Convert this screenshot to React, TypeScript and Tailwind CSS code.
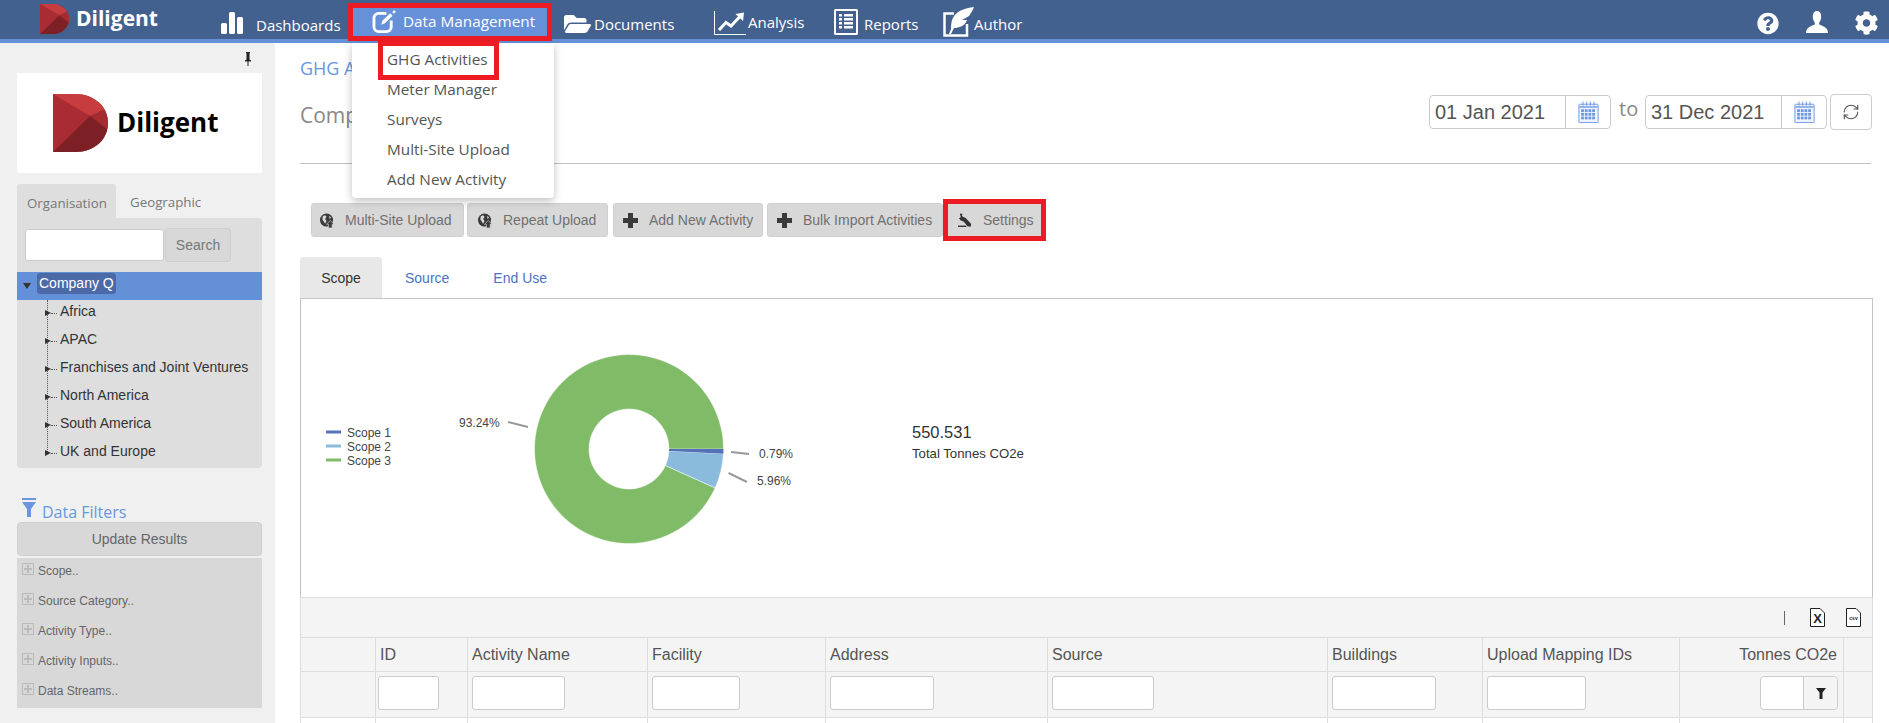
import React from 'react';
import { FaFolderOpen, FaCog, FaQuestionCircle } from 'react-icons/fa';
import { RefreshCw } from 'lucide-react';

const DiligentMark = ({ id, className }: { id: string; className: string }) => (
  <svg viewBox="0 0 55 58" className={className}>
    <clipPath id={id}>
      <path d="M0 0H22C42 0 55 13 55 29C55 45 42 58 22 58H0Z" />
    </clipPath>
    <g clipPath={`url(#${id})`}>
      <rect width="55" height="58" fill="#a82c32" />
      <polygon points="0,0 32,0 55,14 37,22" fill="#c63c3f" />
      <polygon points="37,22 55,14 55,36" fill="#a42b30" />
      <polygon points="0,58 37,22 55,36 55,58" fill="#7c2025" />
    </g>
  </svg>
);

const EditIcon = () => (
  <svg viewBox="0 0 26 24" className="h-[23px] w-[25px] shrink-0" fill="none" stroke="white">
    <path d="M15 3.500H7A5 5 0 0 0 2 8.500V17.500A5 5 0 0 0 7 22.500H15A5 5 0 0 0 20 17.500V11" strokeWidth="3" />
    <path d="M9.500 15.500L11 11L19 3.500L21.500 6L13.500 13.800Z" fill="white" stroke="none" />
    <path d="M22 3L24 1" strokeWidth="2.500" />
  </svg>
);

const BarsIcon = () => (
  <svg viewBox="0 0 22 22" className="h-[22px] w-[22px] shrink-0" fill="white">
    <rect x="0" y="11" width="6" height="11" rx="1.500" />
    <rect x="8" y="0" width="6" height="22" rx="1.500" />
    <rect x="16" y="5" width="6" height="17" rx="1.500" />
  </svg>
);

const ChartIcon = () => (
  <svg viewBox="0 0 32 24" className="h-[24px] w-[32px] shrink-0" fill="none" stroke="white">
    <path d="M0.500 0V23.500H32" strokeWidth="1" />
    <path d="M5 19L12 11.500L17 15L25.500 6" strokeWidth="3" />
    <polygon points="21.500,3 30,1.500 29,10" fill="white" stroke="none" />
  </svg>
);

const ListIcon = () => (
  <svg viewBox="0 0 24 26" className="h-[26px] w-[24px] shrink-0">
    <rect width="24" height="26" rx="1.500" fill="white" />
    <rect x="2" y="2" width="20" height="22" fill="#43618f" />
    {[5, 9, 13, 17].map((y) => (
      <g key={y} fill="white">
        <rect x="5" y={y} width="3" height="2.500" />
        <rect x="10" y={y} width="9" height="2.500" />
      </g>
    ))}
  </svg>
);

const FeatherIcon = () => (
  <svg viewBox="0 0 31 30" className="h-[30px] w-[31px] shrink-0" fill="none">
    <path d="M11 6.500H1.500V28.500H24V17" stroke="white" strokeWidth="2.500" />
    <path d="M31 0C22 1 12 4 9 13C8 17 8 20 8 22L6 27H8L11 21C16 21 22 19 24 13L19 13L26 9C28 6 30 3 31 0Z" fill="white" />
  </svg>
);

const UserIcon = () => (
  <svg viewBox="0 0 22 22" className="h-[22px] w-[22px]" fill="white">
    <path d="M11 0C8 0 6.800 2.500 6.800 5.500C6.800 8.500 8 10.500 8.800 11.500V13.500C6 15 0 16 0 22H22C22 16 16 15 13.200 13.500V11.500C14 10.500 15.200 8.500 15.200 5.500C15.200 2.500 14 0 11 0Z" />
  </svg>
);

const CalendarIcon = () => (
  <svg viewBox="0 0 22 24" className="h-[22px] w-[21px]" fill="none" stroke="#6a96e0">
    <rect x="0.500" y="3.500" width="21" height="20" strokeWidth="1" rx="1" fill="#eef3fb" />
    <path d="M1 6.500H21" strokeWidth="1.500" />
    <path d="M5 0.500V5M9 0.500V5M13 0.500V5M17 0.500V5" strokeWidth="1" />
    {[9, 13, 17].map((y) =>
      [3, 7, 11, 15].map((x) => <rect key={`${x}-${y}`} x={x} y={y} width="3" height="3" fill="#6a96e0" stroke="none" />),
    )}
  </svg>
);

const GlobeIcon = () => (
  <svg viewBox="0 0 15 16" className="h-[15px] w-[14px] shrink-0">
    <circle cx="7" cy="7.500" r="7" fill="#3a3a3a" />
    <path d="M3 3.500L5.500 2.500L7 4L5.500 6.500L7 8.500L5.500 11.500L4 9L2.500 7Z" fill="#d8d8d8" />
    <path d="M10 3L12 5L10 6Z" fill="#d8d8d8" />
    <path d="M11 8L15 12H13V16H9V12H7Z" fill="#3a3a3a" stroke="#d8d8d8" strokeWidth="0.700" />
  </svg>
);

const PlusIcon = () => (
  <svg viewBox="0 0 15 15" className="h-[15px] w-[15px] shrink-0" fill="#3a3a3a">
    <path d="M5 0H10V5H15V10H10V15H5V10H0V5H5Z" />
  </svg>
);

const WrenchIcon = () => (
  <svg viewBox="0 0 14 15" className="ml-[10px] h-[15px] w-[13px] shrink-0" fill="#333">
    <path d="M2 0L5 0.500L4 2.500L6 4L8 4.500L14 11V14H10.500L6 8.500L3 7.500L1 5L3 4L2.500 2Z" />
    <rect x="0" y="13" width="9" height="1.500" />
  </svg>
);

const FileIcon = ({ label, big }: { label: string; big?: boolean }) => (
  <svg viewBox="0 0 15 19" className="h-[19px] w-[15px]">
    <path d="M0.500 0.500H10L14.500 5V18.500H0.500Z" fill="white" stroke="#222" />
    <text x="7.500" y={big ? 15 : 12} textAnchor="middle" fontSize={big ? 13 : 5} fontWeight="bold" fill="#222">
      {label}
    </text>
  </svg>
);

const polar = (r: number, deg: number) => {
  const a = (deg * Math.PI) / 180;
  return `${(629 + r * Math.cos(a)).toFixed(2)} ${(449 + r * Math.sin(a)).toFixed(2)}`;
};

const slice = (from: number, to: number) => {
  const large = to - from > 180 ? 1 : 0;
  return `M${polar(40, from)}L${polar(94.5, from)}A94.5 94.5 0 ${large} 1 ${polar(94.5, to)}L${polar(40, to)}A40 40 0 ${large} 0 ${polar(40, from)}Z`;
};

const DonutChart = () => (
  <svg viewBox="301 299 1571 298" className="block h-[298px] w-[1571px]" fontSize="12" fill="#444">
    <path d={slice(24.3, 360)} fill="#80bb67" stroke="white" strokeWidth="0.500" />
    <path d={slice(2.84, 24.3)} fill="#8abbdc" stroke="white" strokeWidth="0.500" />
    <path d={slice(0, 2.84)} fill="#5572b8" />
    <path d="M508 422L528 427M731 452L749 454M728.500 473L747 482" stroke="#999" strokeWidth="2" />
    <text x="459" y="427">93.24%</text>
    <text x="759" y="458">0.79%</text>
    <text x="757" y="485">5.96%</text>
    {[
      ['Scope 1', 432, '#5572b8'],
      ['Scope 2', 446, '#8abbdc'],
      ['Scope 3', 460, '#80bb67'],
    ].map(([name, y, color]) => (
      <g key={name as string}>
        <rect x="326" y={(y as number) - 1.500} width="15" height="3" fill={color as string} />
        <text x="347" y={(y as number) + 5}>{name}</text>
      </g>
    ))}
    <text x="912" y="438" fontSize="16.500" fill="#333">550.531</text>
    <text x="912" y="458" fontSize="13.200" fill="#333">Total Tonnes CO2e</text>
  </svg>
);

const treeItems = ['Africa', 'APAC', 'Franchises and Joint Ventures', 'North America', 'South America', 'UK and Europe'];
const filterItems = ['Scope..', 'Source Category..', 'Activity Type..', 'Activity Inputs..', 'Data Streams..'];
const menuItems = ['GHG Activities', 'Meter Manager', 'Surveys', 'Multi-Site Upload', 'Add New Activity'];
const columns = ['', 'ID', 'Activity Name', 'Facility', 'Address', 'Source', 'Buildings', 'Upload Mapping IDs'];
const inputWidths = ['', 'w-[61px]', 'w-[93px]', 'w-[88px]', 'w-[104px]', 'w-[102px]', 'w-[104px]', 'w-[99px]'];
const gridCols = 'grid grid-cols-[74px_92px_180px_178px_222px_280px_155px_197px_164px_29px]';

const ActionButton = ({ icon, label, className }: { icon: React.ReactNode; label: string; className: string }) => (
  <button className={`flex h-[34px] items-center gap-[11px] rounded-[3px] border border-[#cfcfcf] bg-[#d8d8d8] text-[14px] text-[#707070] ${className}`}>
    {icon}
    <span className="whitespace-nowrap">{label}</span>
  </button>
);

const DateInput = ({ value }: { value: string }) => (
  <div className="flex h-[34px] w-[182px] rounded-[4px] border border-[#cccccc] bg-white">
    <div className="w-[135px] pl-[5px] text-[20px] leading-[32px] whitespace-nowrap text-[#555]">{value}</div>
    <div className="flex flex-1 items-center justify-center border-l border-[#cccccc]">
      <CalendarIcon />
    </div>
  </div>
);

export default function App() {
  return (
    <div className="flex h-[723px] w-[1889px] flex-col overflow-hidden bg-white font-['Liberation_Sans',Arial,sans-serif]">
      {/* Top nav */}
      <header className="h-[43px] shrink-0 border-b-4 border-[#6690d8] bg-[#43618f] font-['Open_Sans',sans-serif] text-[15px] text-white">
        <div className="flex h-[39px] items-start">
          <DiligentMark id="nav-mark" className="mt-[3px] ml-[40px] h-[32px] w-[29px]" />
          <span className="mt-[4px] ml-[7px] w-[84px] text-[21px] leading-[28px] font-bold">Diligent</span>
          <div className="mt-[12px] ml-[61px] flex w-[119px] items-start">
            <BarsIcon />
            <span className="mt-[2px] ml-[13px] whitespace-nowrap">Dashboards</span>
          </div>
          <div className="relative mt-[3px] ml-[8px] flex h-[38px] w-[204px] items-center border-[5px] border-[#ed1c24] bg-[#6690d8] pb-[1px] pl-[19px]">
            <EditIcon />
            <span className="ml-[6px] text-[15.300px] whitespace-nowrap">Data Management</span>
            <div className="absolute top-[35px] left-[-1px] z-10 w-[202px] rounded-b-[4px] bg-white pt-[1px] pb-[4px] text-[15.300px] text-[#555] shadow-[0_3px_8px_rgba(0,0,0,0.25)]">
              {menuItems.map((item) => (
                <div key={item} className="h-[30px] pl-[35px] leading-[30px] whitespace-nowrap">
                  {item}
                </div>
              ))}
              <div className="absolute top-[-2px] left-[26px] h-[39px] w-[121px] border-[5px] border-[#ed1c24]" />
            </div>
          </div>
          <div className="mt-[12px] ml-[12px] flex w-[110px] items-center">
            <FaFolderOpen className="h-[24px] w-[27px] shrink-0" />
            <span className="ml-[3px] whitespace-nowrap">Documents</span>
          </div>
          <div className="mt-[11px] ml-[40px] flex w-[91px] items-start">
            <ChartIcon />
            <span className="ml-[2px] whitespace-nowrap">Analysis</span>
          </div>
          <div className="mt-[9px] ml-[29px] flex w-[84px] items-start">
            <ListIcon />
            <span className="mt-[4px] ml-[6px] whitespace-nowrap">Reports</span>
          </div>
          <div className="mt-[7px] ml-[25px] flex w-[80px] items-start">
            <FeatherIcon />
            <span className="mt-[6px] whitespace-nowrap">Author</span>
          </div>
          <div className="ml-auto flex items-start pt-[11px] pr-[10px]">
            <FaQuestionCircle className="mt-[1px] h-[23px] w-[22px]" />
            <div className="ml-[27px]">
              <UserIcon />
            </div>
            <FaCog className="ml-[26px] h-[24px] w-[25px]" />
          </div>
        </div>
      </header>

      <div className="flex min-h-0 flex-1">
        {/* Sidebar */}
        <aside className="w-[275px] shrink-0 bg-[#f0f0f0] pr-[13px] pl-[17px]">
          <div className="flex h-[30px] items-end justify-end pr-[10px] pb-[7px]">
            <svg viewBox="0 0 8 14" className="h-[14px] w-[8px]" fill="#222">
              <path d="M2 0H6V1H5.500V7.500L7 8.500V9.500H4.500V14H3.500V9.500H1V8.500L2.500 7.500V1H2Z" />
            </svg>
          </div>
          <div className="flex h-[100px] items-center bg-white pl-[36px]">
            <DiligentMark id="side-mark" className="h-[58px] w-[55px]" />
            <span className="mt-[-2px] ml-[9px] font-['Open_Sans',sans-serif] text-[26px] font-bold text-black">Diligent</span>
          </div>

          <div className="mt-[11px] flex h-[34px] font-['Open_Sans',sans-serif] text-[13.300px] text-[#777]">
            <div className="w-[99px] rounded-t-[3px] bg-[#dedede] pt-[10px] pl-[10px] leading-[18px]">Organisation</div>
            <div className="pt-[9px] pl-[14px] leading-[18px]">Geographic</div>
          </div>
          <div className="h-[250px] rounded-[4px] rounded-tl-none bg-[#dedede] pt-[10px]">
            <div className="flex h-[34px] items-center pl-[8px]">
              <input className="h-[32px] w-[139px] rounded-[3px] border border-[#cccccc] bg-white" />
              <button className="ml-[1px] h-[34px] w-[66px] rounded-[3px] border border-[#cfcfcf] bg-[#d8d8d8] text-[14px] text-[#777]">Search</button>
            </div>
            <div className="mt-[10px] flex h-[28px] items-start bg-[#6490d8] pl-[6px]">
              <span className="mt-[11px] h-0 w-0 border-x-[4px] border-t-[6px] border-x-transparent border-t-[#333]" />
              <span className="mt-[1px] ml-[6px] h-[21px] w-[79px] rounded-[3px] border border-[#4a68a6] bg-[#4c6aa8] pl-[1px] text-[14px] leading-[19px] whitespace-nowrap text-white">Company Q</span>
            </div>
            <div className="relative text-[14px] text-[#333]">
              <div className="absolute top-0 left-[30px] h-[154px] border-l border-dotted border-[#555]" />
              {treeItems.map((item) => (
                <div key={item} className="relative h-[28px] pl-[43px] leading-[22px] whitespace-nowrap">
                  <span className="absolute top-[10px] left-[28px] h-0 w-0 border-y-[3.500px] border-l-[6px] border-y-transparent border-l-[#333]" />
                  <span className="absolute top-[13px] left-[34px] w-[6px] border-t border-dotted border-[#555]" />
                  {item}
                </div>
              ))}
            </div>
          </div>

          <div className="mt-[30px] flex h-[24px] items-start pl-[5px]">
            <svg viewBox="0 0 14 19" className="h-[19px] w-[14px]" fill="#6a96e0">
              <rect width="14" height="2" />
              <path d="M0 4H14L9 11V19H5V11Z" />
            </svg>
            <span className="mt-[4px] ml-[6px] font-['Open_Sans',sans-serif] text-[16px] leading-[20px] text-[#6a96e0]">Data Filters</span>
          </div>
          <button className="block h-[34px] w-[245px] rounded-[4px] border border-[#cfcfcf] bg-[#d8d8d8] pt-[1px] text-[14px] text-[#666]">Update Results</button>
          <div className="mt-[2px] h-[150px] bg-[#d8d8d8]">
            {filterItems.map((item) => (
              <div key={item} className="flex h-[30px] items-start pt-[5px] pl-[5px] text-[12px] leading-[16px] text-[#666]">
                <span className="relative h-[12px] w-[12px] shrink-0 border border-[#bbbbbb]">
                  <span className="absolute top-[4px] left-[1px] h-[2px] w-[8px] bg-[#bbbbbb]" />
                  <span className="absolute top-[1px] left-[4px] h-[8px] w-[2px] bg-[#bbbbbb]" />
                </span>
                <span className="ml-[4px] whitespace-nowrap">{item}</span>
              </div>
            ))}
          </div>
        </aside>

        {/* Main content */}
        <main className="min-w-0 flex-1 pt-[14px] pr-[16px] pl-[25px]">
          <div className="h-[22px] w-[52px] overflow-hidden font-['Open_Sans',sans-serif] text-[18px] leading-[22px] whitespace-nowrap text-[#6a96e0]">GHG Activities</div>
          <div className="mt-[15px] flex h-[36px] items-start justify-between">
            <div className="mt-[7px] w-[52px] overflow-hidden font-['Open_Sans',sans-serif] text-[21px] leading-[28px] whitespace-nowrap text-[#888]">Company Q</div>
            <div className="mr-[1px] flex items-start pt-[1px]">
              <DateInput value="01 Jan 2021" />
              <span className="ml-[8px] w-[26px] font-['Open_Sans',sans-serif] text-[20px] leading-[28px] text-[#888]">to</span>
              <DateInput value="31 Dec 2021" />
              <button className="mt-[-1px] ml-[3px] flex h-[36px] w-[42px] items-center justify-center rounded-[4px] border border-[#cccccc] bg-white">
                <RefreshCw className="h-[18px] w-[18px] text-[#555]" strokeWidth={1.500} />
              </button>
            </div>
          </div>
          <div className="mt-[33px] w-[1571px] border-t border-[#c0c0c0]" />

          <div className="mt-[35px] flex h-[42px] items-center pl-[11px]">
            <ActionButton className="w-[153px] pl-[8px]" icon={<GlobeIcon />} label="Multi-Site Upload" />
            <div className="w-[3px]" />
            <ActionButton className="w-[141px] pl-[10px]" icon={<GlobeIcon />} label="Repeat Upload" />
            <div className="w-[5px]" />
            <ActionButton className="w-[150px] pl-[9px]" icon={<PlusIcon />} label="Add New Activity" />
            <div className="w-[4px]" />
            <ActionButton className="w-[176px] pl-[9px]" icon={<PlusIcon />} label="Bulk Import Activities" />
            <div className="flex h-[42px] w-[103px] items-center border-[5px] border-[#ed1c24] bg-[#d8d8d8] text-[14px] text-[#707070]">
              <WrenchIcon />
              <span className="ml-[12px]">Settings</span>
            </div>
          </div>

          <div className="mt-[16px] flex h-[41px] text-[14px]">
            <div className="w-[82px] rounded-t-[4px] bg-[#e8e8e8] text-center leading-[42px] text-[#333]">Scope</div>
            <div className="ml-[23px] leading-[42px] text-[#4a72c4]">Source</div>
            <div className="ml-[44px] leading-[42px] text-[#4a72c4]">End Use</div>
          </div>

          <div className="w-[1573px] border border-b-0 border-[#c4c4c4]">
            <DonutChart />
          </div>

          {/* Grid */}
          <div className="w-[1573px] border-x border-t border-[#dddddd] bg-[#f4f4f4] text-[16px] text-[#555]">
            <div className="flex h-[39px] items-center justify-end pr-[11px]">
              <span className="mr-[25px] h-[14px] border-l border-[#666]" />
              <FileIcon label="X" big />
              <div className="ml-[21px]">
                <FileIcon label="csv" />
              </div>
            </div>
            <div className={`${gridCols} h-[34px] border-t border-[#dddddd]`}>
              {columns.map((c, i) => (
                <div key={i} className={`pl-[4px] leading-[33px] whitespace-nowrap ${i > 0 ? 'border-l border-[#dddddd]' : ''}`}>
                  {c}
                </div>
              ))}
              <div className="border-l border-[#dddddd] pr-[6px] text-right leading-[33px] whitespace-nowrap">Tonnes CO2e</div>
              <div className="border-l border-[#dddddd]" />
            </div>
            <div className={`${gridCols} h-[46px] border-t border-[#dddddd]`}>
              {inputWidths.map((w, i) => (
                <div key={i} className={`pt-[4px] ${i === 1 ? 'pl-[2px]' : 'pl-[4px]'} ${i > 0 ? 'border-l border-[#dddddd]' : ''}`}>
                  {w && <input className={`h-[34px] rounded-[3px] border border-[#cccccc] bg-white ${w}`} />}
                </div>
              ))}
              <div className="flex justify-end border-l border-[#dddddd] pt-[4px] pr-[5px]">
                <div className="flex h-[34px] w-[78px] rounded-[4px] border border-[#cccccc] bg-white">
                  <div className="flex-1" />
                  <div className="flex w-[34px] items-center justify-center rounded-r-[4px] border-l border-[#cccccc] bg-[#f4f4f4]">
                    <svg viewBox="0 0 10 11" className="h-[11px] w-[10px]" fill="#222">
                      <path d="M0 0H10L6.500 4.500V11H3.500V4.500Z" />
                    </svg>
                  </div>
                </div>
              </div>
              <div className="border-l border-[#dddddd]" />
            </div>
            <div className={`${gridCols} h-[10px] border-t border-[#dddddd] bg-white`}>
              {[...Array(10)].map((_, i) => (
                <div key={i} className={i > 0 ? 'border-l border-[#dddddd]' : ''} />
              ))}
            </div>
          </div>
        </main>
      </div>
    </div>
  );
}
